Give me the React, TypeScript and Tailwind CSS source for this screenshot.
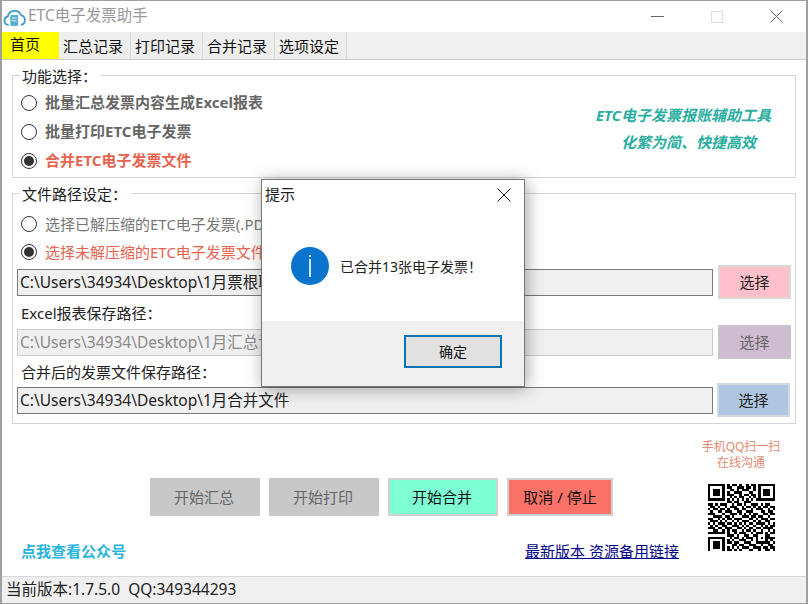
const font = "font-['Noto_Sans','Noto_Sans_CJK_SC',sans-serif]";

const qr = [
  "1111111010110100101101111111",
  "1000001011001110110101000001",
  "1011101001101011100101011101",
  "1011101010011100011001011101",
  "1011101011100101101101011101",
  "1000001001010110010101000001",
  "1111111010101010101011111111",
  "0000000011011001110000000000",
  "1101011100101101001110101100",
  "0110100101110010110101011011",
  "1011011010011011001011100101",
  "0100110111001100111000110110",
  "1110001001110101010110011011",
  "0011110110100011101101100100",
  "1100101011011100011010111011",
  "0111010100101011100101001100",
  "1010111011010101011011110101",
  "0101001100111010100100101011",
  "1110110111001101011011011110",
  "0011001010110010110100100101",
  "1111111010010111001011101011",
  "0000000011101001100110001100",
  "1111111001011010111010101111",
  "1000001010100111001010001010",
  "1011101011011001110011111101",
  "1011101000110110011100100110",
  "1011101010101011100111011011",
  "1000001011010100011001001101",
];

function QrCode() {
  return (
    <svg width="67" height="67" viewBox="0 0 28 28" shapeRendering="crispEdges">
      {qr.map((row, y) =>
        row.split("").map((c, x) => (c === "1" ? <rect key={x + "-" + y} x={x} y={y} width="1" height="1" fill="#000" /> : null))
      )}
    </svg>
  );
}

function Radio({ on, label, className, h }: { on?: boolean; label: string; className: string; h: string }) {
  return (
    <div className={"flex items-center " + h}>
      <span className="w-4 h-4 rounded-full border border-[#333] flex items-center justify-center shrink-0">
        {on && <span className="w-[10px] h-[10px] rounded-full bg-[#333]" />}
      </span>
      <span className={"ml-[8px] whitespace-nowrap " + className}>{label}</span>
    </div>
  );
}

function PathRow({ value, disabled, btn, btnText, btnMargin }: { value: string; disabled?: boolean; btn: string; btnText: string; btnMargin: string }) {
  return (
    <div className="flex items-center h-[34px]">
      <div className={"w-[696px] h-[27px] bg-[#f0f0f0] border flex items-center px-[2px] pt-[2px] text-[15.5px] whitespace-nowrap overflow-hidden " + (disabled ? "border-[#ccc] text-[#8a8a8a]" : "border-[#7a7a7a] text-[#222]")}>
        {value}
      </div>
      <div className={"w-[73px] h-[34px] flex items-center justify-center text-[15px] " + btnMargin + " " + btn + " " + btnText}>选择</div>
    </div>
  );
}

export default function App() {
  return (
    <div className={"relative w-[808px] h-[604px] bg-white overflow-hidden border border-[#a0a0a0] border-x-2 flex flex-col " + font}>
      {/* Title bar */}
      <div className="h-[31px] flex items-center shrink-0">
        <svg className="ml-[1px]" width="23" height="22" viewBox="0 0 22 20" fill="none">
          <path d="M5.500 17.500a4 4 0 0 1-1-7.900 6.800 6.800 0 0 1 13-1.100 4.600 4.600 0 0 1-.5 9" stroke="#3d9cc4" strokeWidth="1.700" />
          <rect x="7" y="8" width="7.500" height="10.500" rx="1" fill="#58b0d0" />
          <path d="M8.500 11h4.500M8.500 13.500h4.500" stroke="#d8eef6" />
        </svg>
        <span className="ml-[2px] -mt-[2px] text-[15.5px] text-[#999]">ETC电子发票助手</span>
        <div className="ml-auto flex items-center">
          <span className="w-[13px] h-px bg-[#666] mr-[47px]" />
          <span className="w-[12px] h-[12px] border border-[#ddd] mr-[47px]" />
          <svg width="13" height="13" viewBox="0 0 13 13" className="mr-[23px]"><path d="M0.500 0.500l12 12M12.500 0.500l-12 12" stroke="#666" /></svg>
        </div>
      </div>

      {/* Tabs */}
      <div className="h-[28px] shrink-0 bg-[#f0f0f0] border-b border-[#ccc] flex text-[15px] text-[#111]">
        <div className="w-[57px] h-[27px] bg-[#ffff00] pl-[8px] leading-[24px]">首页</div>
        {["汇总记录", "打印记录", "合并记录", "选项设定"].map((t) => (
          <div key={t} className="w-[72px] h-[27px] border-r border-[#d9d9d9] bg-[#eeeeee] pl-[4px] leading-[29px]">{t}</div>
        ))}
      </div>

      {/* Body */}
      <div className="flex-1 pl-[10px] pr-[10px] pt-[15px] flex flex-col">
        <fieldset className="h-[103px] border border-[#d5d5d5] pl-[8px] pr-[24px] flex justify-between">
          <div>
            <div className="absolute -mt-[9px] -ml-px bg-white pl-[2px] pr-[4px] text-[15px] leading-[18px] text-[#222]">功能选择：</div>
            <div className="pt-[12px]">
              <Radio h="h-[29px]" label="批量汇总发票内容生成Excel报表" className="font-bold text-[15px] text-[#666]" />
              <Radio h="h-[29px]" label="批量打印ETC电子发票" className="font-bold text-[15px] text-[#666]" />
              <Radio h="h-[29px]" on label="合并ETC电子发票文件" className="font-bold text-[15px] text-[#e8634f]" />
            </div>
          </div>
          <div className="pt-[26px] text-center italic font-bold text-[15px] text-[#2aaea0] leading-[27px]">
            <div>ETC电子发票报账辅助工具</div>
            <div className="pl-[10px]">化繁为简、快捷高效</div>
          </div>
        </fieldset>

        <fieldset className="mt-[15px] h-[231px] border border-[#d5d5d5] pl-[4px]">
          <div className="absolute -mt-[9px] ml-[3px] bg-white pl-[2px] pr-[4px] text-[15px] leading-[18px] text-[#222]">文件路径设定：</div>
          <div className="pl-[4px] pt-[16px] -mb-px">
            <Radio h="h-[28px]" label="选择已解压缩的ETC电子发票(.PDF)" className="text-[15px] text-[#777]" />
            <Radio h="h-[28px]" on label="选择未解压缩的ETC电子发票文件" className="text-[15px] text-[#e8634f]" />
          </div>
          <PathRow value="C:\Users\34934\Desktop\1月票根联发票文件" btnMargin="ml-[5px]" btn="bg-[#ffc0cb] border-2 border-[#d8d8d8]" btnText="text-[#222]" />
          <div className="pl-[4px] h-[26px] text-[15px] leading-[28px] text-[#222]">Excel报表保存路径：</div>
          <PathRow disabled value="C:\Users\34934\Desktop\1月汇总记录报表" btnMargin="ml-[5px]" btn="bg-[#d0bcd2] border border-[#c8c8c8]" btnText="text-[#666]" />
          <div className="pl-[4px] h-[24px] text-[15px] leading-[26px] text-[#222]">合并后的发票文件保存路径：</div>
          <PathRow value="C:\Users\34934\Desktop\1月合并文件" btnMargin="ml-[4px]" btn="bg-[#aec6e0] border-2 border-[#d0d8e0]" btnText="text-[#222]" />
        </fieldset>

        {/* Bottom actions */}
        <div className="flex flex-1">
          <div className="flex-1 flex flex-col">
            <div className="mt-[54px] ml-[138px] flex gap-[9px] text-[15px]">
              <div className="w-[110px] h-[38px] bg-[#c8c8c8] text-[#666] pr-[2px] flex items-center justify-center">开始汇总</div>
              <div className="w-[110px] h-[38px] bg-[#c8c8c8] text-[#666] pr-[2px] flex items-center justify-center">开始打印</div>
              <div className="w-[110px] h-[38px] bg-[#7fffd4] border-2 border-[#d0d0d0] text-[#111] pr-[2px] flex items-center justify-center">开始合并</div>
              <div className="w-[106px] h-[38px] bg-[#fa7268] border-2 border-[#d0d0d0] text-[#111] flex items-center justify-center">取消 / 停止</div>
            </div>
            <div className="mt-[24px] flex justify-between pl-[9px] pr-[19px] text-[15px]">
              <span className="font-bold text-[#2bb5dc]">点我查看公众号</span>
              <span className="text-[#00008b] underline">最新版本 资源备用链接</span>
            </div>
          </div>
          <div className="w-[86px] mr-[12px] pt-[15px] flex flex-col items-center">
            <div className="text-[12px] leading-[16px] text-[#e08a70] text-center whitespace-nowrap">手机QQ扫一扫<br />在线沟通</div>
            <div className="mt-[13px]"><QrCode /></div>
          </div>
        </div>
      </div>

      {/* Status bar */}
      <div className="h-[27px] shrink-0 bg-[#f0f0f0] border-t border-[#d8d8d8] pl-[4px] flex items-center text-[15.5px] text-[#222]">
        当前版本:1.7.5.0&nbsp;&nbsp;QQ:349344293
      </div>

      {/* Message dialog */}
      <div className="absolute left-[259px] top-[178px] w-[264px] h-[208px] bg-white border border-[#777] shadow-[2px_2px_16px_rgba(0,0,0,0.35)] flex flex-col">
        <div className="h-[29px] flex items-center justify-between pl-[3px] pr-[13px] text-[15px] text-[#222]">
          <span>提示</span>
          <svg width="14" height="14" viewBox="0 0 14 14"><path d="M0.500 0.500l13 13M13.500 0.500l-13 13" stroke="#222" /></svg>
        </div>
        <div className="flex-1 flex items-center pl-[29px] pt-[2px]">
          <span className="w-[38px] h-[38px] rounded-full bg-[#0a74cc] flex flex-col items-center justify-center gap-[2px]">
            <span className="w-[2px] h-[2px] bg-[#cfe8f8]" />
            <span className="w-[2px] h-[18px] bg-[#cfe8f8]" />
          </span>
          <span className="ml-[11px] text-[14px] text-[#222]">已合并13张电子发票！</span>
        </div>
        <div className="h-[65px] bg-[#f0f0f0] flex items-center justify-end pr-[22px] pb-[4px]">
          <div className="w-[98px] h-[33px] bg-[#e1e1e1] border-2 border-[#0a74b4] flex items-center justify-center text-[14px] text-[#111]">确定</div>
        </div>
      </div>
    </div>
  );
}
